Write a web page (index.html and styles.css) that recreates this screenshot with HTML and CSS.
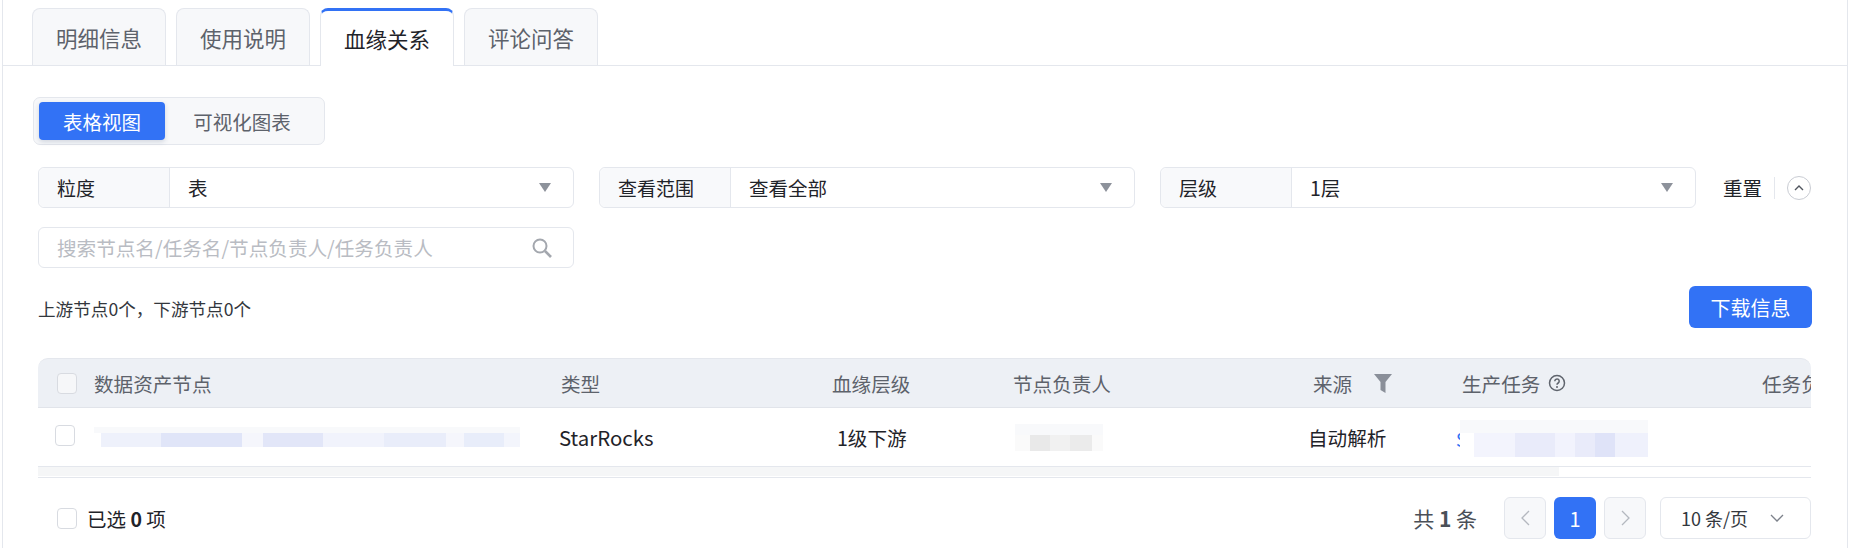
FILE: index.html
```html
<!DOCTYPE html>
<html lang="zh-CN">
<head>
    <meta charset="UTF-8">
    <title>血缘关系</title>
    <link rel="stylesheet" href="styles.css">
</head>
<body>
<div class="page">

    <!-- Tabs -->
    <div class="tabs">
        <div class="tab">明细信息</div>
        <div class="tab">使用说明</div>
        <div class="tab active">血缘关系</div>
        <div class="tab">评论问答</div>
    </div>

    <div class="panel">
        <!-- View switch -->
        <div class="segment">
            <div class="segment-item on">表格视图</div>
            <div class="segment-item">可视化图表</div>
        </div>

        <!-- Filters -->
        <div class="filters">
            <div class="field">
                <div class="field-label">粒度</div>
                <div class="field-value">表</div>
                <div class="caret"></div>
            </div>
            <div class="field">
                <div class="field-label">查看范围</div>
                <div class="field-value">查看全部</div>
                <div class="caret"></div>
            </div>
            <div class="field field-short">
                <div class="field-label">层级</div>
                <div class="field-value">1层</div>
                <div class="caret"></div>
            </div>
            <div class="reset">重置</div>
            <div class="collapse">
                <svg width="10" height="7" viewBox="0 0 10 7"><path d="M1 6 5 2l4 4" fill="none" stroke="#50555e" stroke-width="1.4"/></svg>
            </div>
        </div>

        <div class="search">
            <span class="search-text">搜索节点名/任务名/节点负责人/任务负责人</span>
            <svg width="22" height="22" viewBox="0 0 22 22"><circle cx="9" cy="9" r="6.5" fill="none" stroke="#a3a7ae" stroke-width="2"/><path d="m14 14 6 6" stroke="#a3a7ae" stroke-width="2.6"/></svg>
        </div>

        <!-- Summary -->
        <div class="summary">
            <span class="summary-text">上游节点0个，下游节点0个</span>
            <div class="download">下载信息</div>
        </div>

        <!-- Table -->
        <div class="table">
            <div class="thead">
                <div class="check-cell"><span class="check check-head"></span></div>
                <div>数据资产节点</div>
                <div>类型</div>
                <div>血缘层级</div>
                <div>节点负责人</div>
                <div class="source">来源
                    <svg width="18" height="19" viewBox="0 0 18 19"><path d="M0 0h18l-6.500 8v11l-5-3V8z" fill="#8a8f99"/></svg>
                </div>
                <div class="task">生产任务
                    <svg width="18" height="18" viewBox="0 0 18 18"><circle cx="9" cy="9" r="7.500" fill="none" stroke="#5f646d" stroke-width="1.500"/><path d="M6.800 7.200a2.200 2.200 0 1 1 3.400 1.800c-.8.500-1.200.9-1.200 1.800" fill="none" stroke="#5f646d" stroke-width="1.500"/><circle cx="9" cy="13" r="1" fill="#5f646d"/></svg>
                </div>
                <div>任务负责人</div>
            </div>
            <div class="trow">
                <div class="check-cell"><span class="check"></span></div>
                <div class="blur blur-node"><div class="mosaic mosaic-node"></div></div>
                <div class="type-cell">StarRocks</div>
                <div>1级下游</div>
                <div class="blur blur-owner"><div class="mosaic mosaic-owner"></div></div>
                <div>自动解析</div>
                <div class="task-link">
                    <span class="link">S</span>
                    <div class="blur blur-task"><div class="mosaic mosaic-task"></div></div>
                </div>
            </div>
            <div class="scrollbar"><div class="thumb"></div></div>
        </div>

        <!-- Footer -->
        <div class="footer">
            <span class="check"></span>
            <span class="selected">已选 <b>0</b> 项</span>
            <div class="pager">
                <span class="total">共 <b>1</b> 条</span>
                <div class="page-btn disabled">
                    <svg width="9" height="16" viewBox="0 0 9 16"><path d="M8 1 1 8l7 7" fill="none" stroke="#b4b8bf" stroke-width="1.300"/></svg>
                </div>
                <div class="page-btn current">1</div>
                <div class="page-btn disabled">
                    <svg width="9" height="16" viewBox="0 0 9 16"><path d="m1 1 7 7-7 7" fill="none" stroke="#b4b8bf" stroke-width="1.300"/></svg>
                </div>
                <div class="page-size">
                    <span>10 条/页</span>
                    <svg width="14" height="9" viewBox="0 0 14 9"><path d="m1 1 6 6 6-6" fill="none" stroke="#7c818a" stroke-width="1.300"/></svg>
                </div>
            </div>
        </div>
    </div>
</div>
</body>
</html>
```

FILE: styles.css
```css
/* Page frame */
body {
    margin: 0;
    background: #fff;
    color: #1f2329;
    font-family: "Noto Sans CJK SC", "Liberation Sans", sans-serif;
    overflow: hidden;
}

.page {
    width: 1844px;
    height: 548px;
    margin-left: 2px;
    border-left: 1px solid #e4e7ed;
    border-right: 1px solid #e4e7ed;
}

/* Tabs */
.tabs {
    display: flex;
    gap: 10px;
    height: 66px;
    padding: 8px 0 0 29px;
    box-sizing: border-box;
    border-bottom: 1px solid #e4e7ed;
}

.tab {
    width: 134px;
    height: 57px;
    box-sizing: border-box;
    display: flex;
    align-items: center;
    justify-content: center;
    font-size: 21.5px;
    color: #5d626b;
    background: #f7f8fa;
    border: 1px solid #e4e7ed;
    border-bottom: none;
    border-radius: 8px 8px 0 0;
}

.tab.active {
    height: 58px;
    color: #1f2329;
    background: #fff;
    border-top: 3px solid #3272f5;
}

/* Panel */
.panel {
    padding: 31px 35px 0 35px;
}

.segment {
    display: flex;
    width: 292px;
    height: 48px;
    box-sizing: border-box;
    padding: 4px 5px;
    background: #f7f8fa;
    border: 1px solid #e4e7ed;
    border-radius: 7px;
    margin-left: -5px;
}

.segment-item {
    display: flex;
    align-items: center;
    justify-content: center;
    font-size: 19.5px;
    color: #5d626b;
    width: 126px;
}

.segment-item:last-child {
    flex: 1;
}

.segment-item.on {
    color: #fff;
    background: #3272f5;
    border-radius: 4px;
    box-shadow: 0 2px 5px rgba(40, 60, 100, 0.18);
}

/* Filter row */
.filters {
    display: flex;
    align-items: center;
    margin-top: 22px;
}

.field {
    display: flex;
    align-items: center;
    flex: none;
    width: 536px;
    height: 41px;
    box-sizing: border-box;
    margin-right: 25px;
    border: 1px solid #e4e7ed;
    border-radius: 6px;
}

.field-short {
    margin-right: 27px;
}

.field-label {
    width: 131px;
    height: 100%;
    box-sizing: border-box;
    padding-left: 18px;
    display: flex;
    align-items: center;
    font-size: 19px;
    background: #f8f9fb;
    border-right: 1px solid #e4e7ed;
    border-radius: 6px 0 0 6px;
}

.field-value {
    flex: 1;
    padding-left: 18px;
    font-size: 19.5px;
}

.caret {
    width: 0;
    height: 0;
    margin-right: 22px;
    border-left: 6px solid transparent;
    border-right: 6px solid transparent;
    border-top: 9px solid #8d929b;
}

.reset {
    flex: none;
    white-space: nowrap;
    font-size: 19.5px;
    padding-right: 12px;
    border-right: 1px solid #e4e7ed;
    line-height: 22px;
}

.collapse {
    flex: none;
    width: 24px;
    height: 24px;
    margin-left: 12px;
    box-sizing: border-box;
    border: 1px solid #c9ccd3;
    border-radius: 50%;
    display: flex;
    align-items: center;
    justify-content: center;
}

.search {
    display: flex;
    align-items: center;
    justify-content: space-between;
    width: 536px;
    height: 41px;
    box-sizing: border-box;
    margin-top: 19px;
    padding: 0 20px 0 18px;
    border: 1px solid #e4e7ed;
    border-radius: 6px;
}

.search-text {
    font-size: 19.6px;
    color: #b9bcc3;
}

/* Summary row */
.summary {
    display: flex;
    align-items: center;
    justify-content: space-between;
    margin-top: 18px;
    height: 42px;
}

.summary-text {
    font-size: 17.6px;
    color: #33373d;
    padding-top: 3px;
}

.download {
    width: 123px;
    height: 42px;
    display: flex;
    align-items: center;
    justify-content: center;
    color: #fff;
    font-size: 20px;
    background: #3272f5;
    border-radius: 6px;
}

/* Table */
.table {
    width: 1773px;
    margin-top: 30px;
    overflow: hidden;
}

.thead,
.trow {
    display: grid;
    align-items: center;
    white-space: nowrap;
}

.thead {
    grid-template-columns: 56px 467px 271px 181px 300px 149px 300px 100px;
    height: 50px;
    box-sizing: border-box;
    background: #edf0f5;
    border-top: 1px solid #e4e7ed;
    border-bottom: 1px solid #e1e4ea;
    border-radius: 10px 10px 0 0;
    font-size: 19.6px;
    color: #5d626b;
}

.trow {
    grid-template-columns: 56px 465px 278px 178px 293px 149px 300px;
    height: 59px;
    box-sizing: border-box;
    border-bottom: 1px solid #e4e7ed;
    font-size: 19.6px;
}

.type-cell {
    font-size: 20.4px;
}

.check-cell {
    padding-left: 19px;
    display: flex;
}

.check {
    display: block;
    width: 20px;
    height: 21px;
    box-sizing: border-box;
    background: #fff;
    border: 1px solid #d8dbe1;
    border-radius: 4px;
}

.check-head {
    background: #f6f7f9;
}

.trow .check-cell {
    padding-left: 17px;
    margin-top: -4px;
}

.source,
.task {
    display: flex;
    align-items: center;
}

.source svg {
    margin-left: 22px;
}

.task svg {
    margin-left: 8px;
}

/* Masked values */
.blur {
    background: #f8f9fb;
}

.mosaic {
    width: 100%;
}

.blur-node {
    width: 426px;
    height: 20px;
    padding-top: 6px;
    box-sizing: border-box;
}

.mosaic-node {
    height: 14px;
    background: linear-gradient(90deg,
        #fff 0 7px, #eef1fb 7px 67px, #e0e5f8 67px 148px, #f5f6fc 148px 169px,
        #e2e6f8 169px 229px, #f1f3fc 229px 290px, #e9edfa 290px 352px,
        #f5f6fc 352px 370px, #e8edfa 370px 410px, #f3f5fc 410px);
}

.blur-owner {
    width: 88px;
    height: 27px;
    padding-top: 11px;
    box-sizing: border-box;
}

.mosaic-owner {
    height: 16px;
    background: linear-gradient(90deg,
        #fafafa 0 15px, #e9e9e9 15px 35px, #f1f1f1 35px 55px, #ebebeb 55px 77px, #fafafa 77px);
}

.task-link {
    display: flex;
    align-items: center;
    margin-left: -1px;
    margin-top: 3px;
}

.link {
    width: 4px;
    overflow: hidden;
    color: #3272f5;
    font-size: 18px;
}

.blur-task {
    width: 188px;
    height: 37px;
    padding-top: 13px;
    box-sizing: border-box;
}

.mosaic-task {
    height: 24px;
    background: linear-gradient(90deg,
        #fff 0 14px, #f3f4fd 14px 55px, #e9ebfa 55px 95px, #f2f3fd 95px 115px,
        #e9ebfa 115px 135px, #dfe3f8 135px 155px, #eff1fc 155px);
}

.scrollbar {
    height: 10px;
    border-bottom: 1px solid #e4e7ed;
}

.thumb {
    width: 1521px;
    height: 9px;
    background: #f5f6f7;
}

/* Footer */
.footer {
    display: flex;
    align-items: center;
    height: 42px;
    margin-top: 19px;
    padding-left: 19px;
    width: 1773px;
    box-sizing: border-box;
}

.selected {
    margin-left: 10px;
    font-size: 19.5px;
}

.pager {
    display: flex;
    align-items: center;
    margin-left: auto;
}

.total {
    font-size: 21px;
    color: #4b5058;
    margin-right: 27px;
}

.page-btn {
    width: 42px;
    height: 42px;
    box-sizing: border-box;
    margin-right: 8px;
    display: flex;
    align-items: center;
    justify-content: center;
    border-radius: 6px;
    font-size: 20px;
}

.page-btn.disabled {
    background: #f7f8fa;
    border: 1px solid #e4e7ed;
}

.page-btn.current {
    background: #3272f5;
    color: #fff;
}

.page-size {
    width: 151px;
    height: 42px;
    box-sizing: border-box;
    margin-left: 6px;
    padding: 0 26px 0 20px;
    display: flex;
    align-items: center;
    justify-content: space-between;
    border: 1px solid #e4e7ed;
    border-radius: 6px;
    font-size: 18px;
    color: #33373d;
}
```
